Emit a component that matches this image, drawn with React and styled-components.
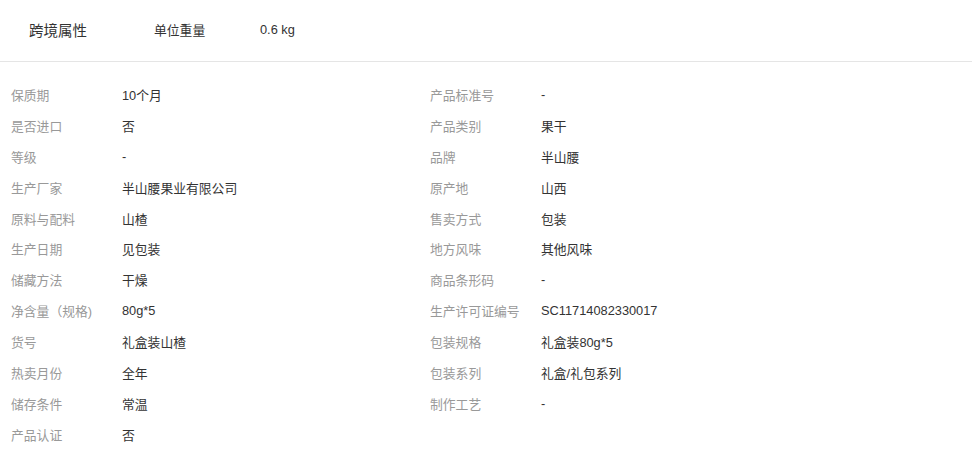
import React from "react";
import styled, { createGlobalStyle } from "styled-components";

const GlobalStyle = createGlobalStyle`
  body {
    margin: 0;
    background: #fff;
    font-family: "Liberation Sans", "Noto Sans CJK SC", sans-serif;
  }
`;

// product attribute pairs, read row by row
const attrs = [
  ["保质期", "10个月"],
  ["产品标准号", "-"],
  ["是否进口", "否"],
  ["产品类别", "果干"],
  ["等级", "-"],
  ["品牌", "半山腰"],
  ["生产厂家", "半山腰果业有限公司"],
  ["原产地", "山西"],
  ["原料与配料", "山楂"],
  ["售卖方式", "包装"],
  ["生产日期", "见包装"],
  ["地方风味", "其他风味"],
  ["储藏方法", "干燥"],
  ["商品条形码", "-"],
  ["净含量（规格)", "80g*5"],
  ["生产许可证编号", "SC11714082330017"],
  ["货号", "礼盒装山楂"],
  ["包装规格", "礼盒装80g*5"],
  ["热卖月份", "全年"],
  ["包装系列", "礼盒/礼包系列"],
  ["储存条件", "常温"],
  ["制作工艺", "-"],
  ["产品认证", "否"],
];

function App() {
  return (
    <Page>
      <GlobalStyle />
      <Header>
        <SectionTitle>跨境属性</SectionTitle>
        <HeaderLabel>单位重量</HeaderLabel>
        <HeaderValue>0.6 kg</HeaderValue>
      </Header>
      <AttrGrid>
        {attrs.map(([label, value]) => (
          <Attr key={label}>
            <Label>{label}</Label>
            <Value>{value}</Value>
          </Attr>
        ))}
      </AttrGrid>
    </Page>
  );
}

export default App;

const Page = styled.div`
  width: 972px;
  height: 457px;
  background: #fff;
`;

// top strip with cross-border attribute
const Header = styled.div`
  height: 62px;
  display: flex;
  align-items: center;
  padding-left: 29px;
  padding-bottom: 3px;
  border-bottom: 1px solid #e5e5e5;
  box-sizing: border-box;
`;

const SectionTitle = styled.div`
  width: 125px;
  font-size: 14.5px;
  color: #333;
`;

const HeaderLabel = styled.div`
  width: 106px;
  font-size: 12.8px;
  color: #333;
`;

const HeaderValue = styled.div`
  font-size: 12.8px;
  color: #333;
`;

const AttrGrid = styled.div`
  display: grid;
  grid-template-columns: 419px 419px;
  padding: 17px 0 0 11px;
`;

const Attr = styled.div`
  display: flex;
  align-items: center;
  height: 30.9px;
  font-size: 12.8px;
`;

const Label = styled.div`
  width: 111px;
  color: #999;
  white-space: nowrap;
`;

const Value = styled.div`
  color: #333;
  white-space: nowrap;
`;
